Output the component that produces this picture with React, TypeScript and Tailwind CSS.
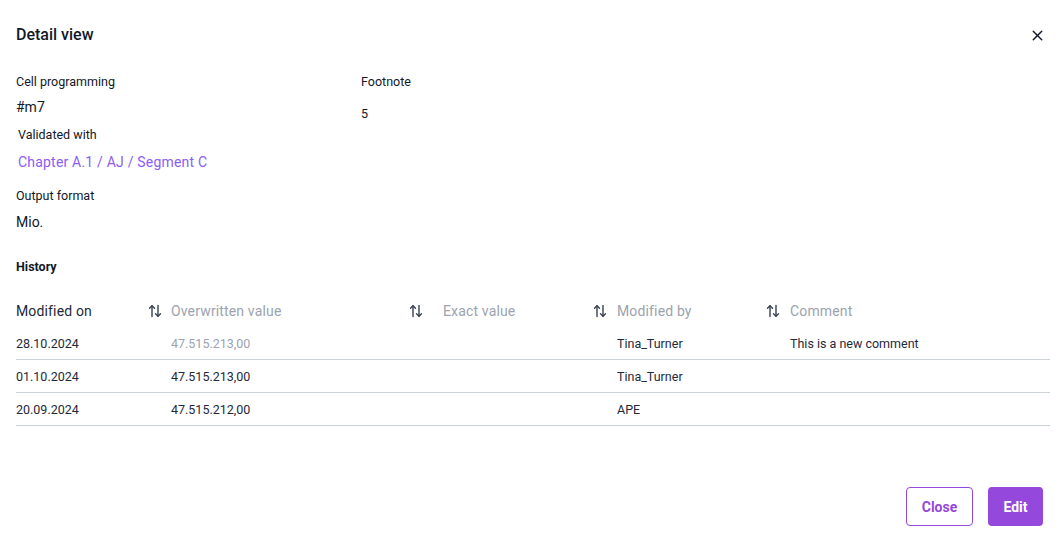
import { X } from 'lucide-react'

type Row = {
  date: string
  overwritten: string
  exact: string
  by: string
  comment: string
  muted?: boolean
}

const rows: Row[] = [
  { date: '28.10.2024', overwritten: '47.515.213,00', exact: '', by: 'Tina_Turner', comment: 'This is a new comment', muted: true },
  { date: '01.10.2024', overwritten: '47.515.213,00', exact: '', by: 'Tina_Turner', comment: '' },
  { date: '20.09.2024', overwritten: '47.515.212,00', exact: '', by: 'APE', comment: '' },
]

// up arrow + down arrow, side by side
function SortIcon() {
  return (
    <svg width="14" height="14" viewBox="0 0 14 14" fill="none" stroke="#374151" strokeWidth="1.4" strokeLinecap="round" strokeLinejoin="round">
      <path d="M4 12.5V1.8" />
      <path d="M1.5 4.3 4 1.8l2.5 2.5" />
      <path d="M10 1.5v10.7" />
      <path d="M7.5 9.7 10 12.2l2.5-2.5" />
    </svg>
  )
}

const cols = 'grid grid-cols-[155px_272px_174px_173px_1fr]'

export default function App() {
  return (
    <div className="h-[549px] w-full bg-white flex flex-col px-4 pt-[23px] pb-[23px] text-[#1f2937]" style={{ fontFamily: 'Roboto, "Noto Sans", sans-serif' }}>
      {/* Title bar */}
      <div className="flex items-center justify-between h-6">
        <h1 className="text-base font-medium text-[#111827]">Detail view</h1>
        <button className="mr-[1px] text-[#111827]">
          <X size={17} strokeWidth={2} />
        </button>
      </div>

      {/* Properties */}
      <div className="flex mt-[27px]">
        <div className="w-[345px] flex flex-col">
          <span className="text-[12.5px] leading-4 text-[#111827]">Cell programming</span>
          <span className="text-sm leading-5 mt-[7px] text-[#111827]">#m7</span>
          <span className="text-[12.5px] leading-4 mt-[10px] ml-[2px] text-[#111827]">Validated with</span>
          <a className="text-sm leading-5 mt-[9px] ml-[2px] text-[#8b5cf6] tracking-[0.2px]">Chapter A.1 / AJ / Segment C</a>
          <span className="text-[12.5px] leading-4 mt-[16px] text-[#111827]">Output format</span>
          <span className="text-sm leading-5 mt-[8px] text-[#111827]">Mio.</span>
        </div>
        <div className="flex flex-col">
          <span className="text-[12.5px] leading-4 text-[#111827]">Footnote</span>
          <span className="text-[12.5px] leading-4 mt-[16px] text-[#111827]">5</span>
        </div>
      </div>

      {/* History */}
      <h2 className="text-[12.5px] leading-4 font-bold mt-[27px] text-[#111827]">History</h2>

      <div className="mt-[20px] mr-[-3px]">
        <div className={`${cols} h-8 items-center text-sm tracking-[0.15px]`}>
          <div className="flex items-center justify-between pr-[9px]">
            <span className="text-[#1f2937]">Modified on</span>
            <SortIcon />
          </div>
          <div className="flex items-center justify-between pr-[20px]">
            <span className="text-[#9ca3af]">Overwritten value</span>
            <SortIcon />
          </div>
          <div className="flex items-center justify-between pr-[10px]">
            <span className="text-[#9ca3af]">Exact value</span>
            <SortIcon />
          </div>
          <div className="flex items-center justify-between pr-[10px]">
            <span className="text-[#9ca3af]">Modified by</span>
            <SortIcon />
          </div>
          <div className="flex items-center">
            <span className="text-[#9ca3af]">Comment</span>
          </div>
        </div>
        {rows.map((r) => (
          <div key={r.date} className={`${cols} h-[33px] pt-[2px] items-center text-[12.5px] border-b border-[#cbd2da] text-[#1e293b]`}>
            <span>{r.date}</span>
            <span className={r.muted ? 'text-[#9ca3af]' : ''}>{r.overwritten}</span>
            <span>{r.exact}</span>
            <span>{r.by}</span>
            <span>{r.comment}</span>
          </div>
        ))}
      </div>

      {/* Footer actions */}
      <div className="mt-auto flex justify-end gap-[15px] pr-1">
        <button className="h-[39px] w-[67px] rounded border border-[#9448dc] text-[#9448dc] text-sm font-bold">Close</button>
        <button className="h-[39px] w-[55px] rounded bg-[#9448dc] text-white text-sm font-bold">Edit</button>
      </div>
    </div>
  )
}
